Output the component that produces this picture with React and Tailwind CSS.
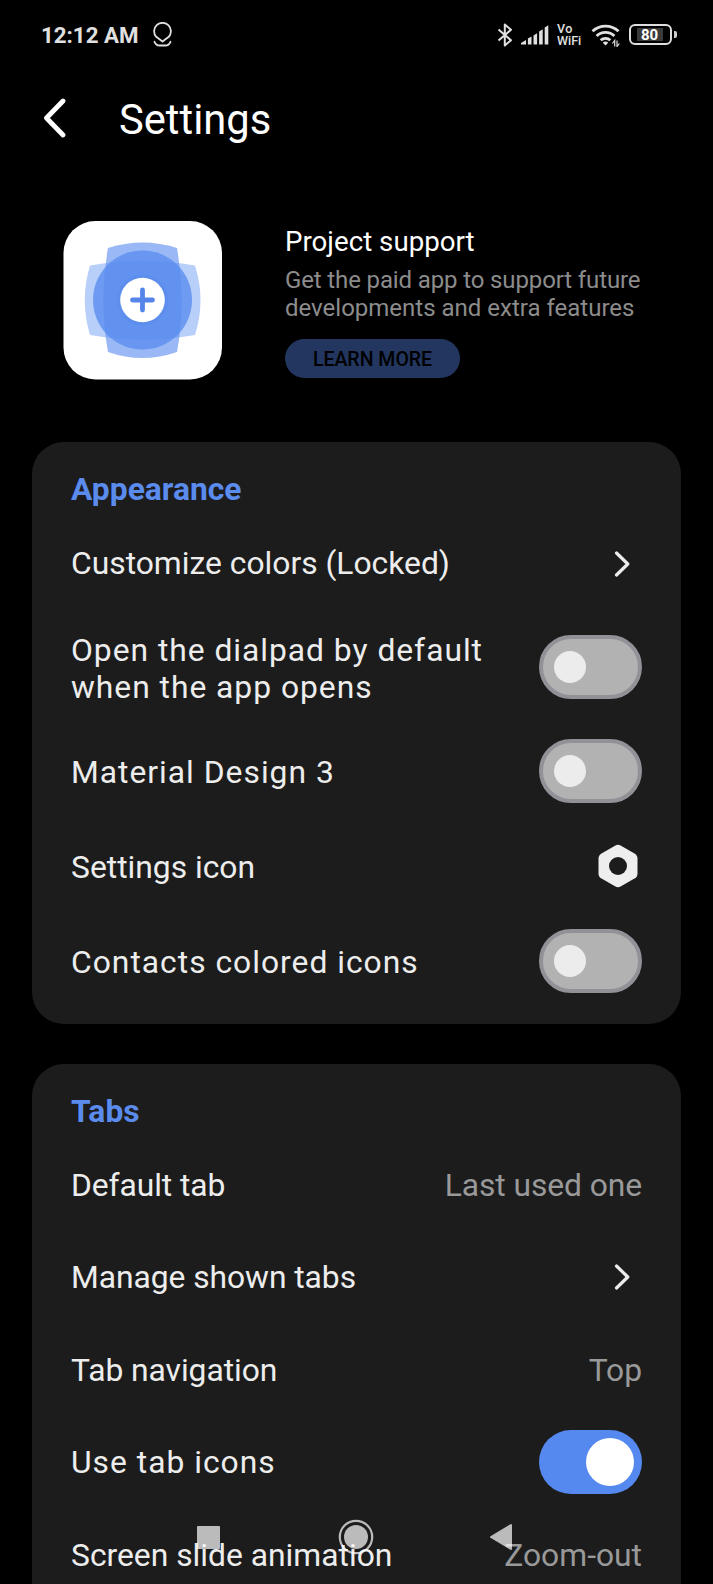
import React from "react";

function StatusBar() {
  return (
    <div className="flex h-[69px] shrink-0 items-center pl-[41px] pr-[36px] text-[#e0e0e0]">
      <span className="text-[22.300px] leading-[28px] font-bold">12:12 AM</span>
      <svg className="ml-[13px]" width="22" height="26" viewBox="0 0 22 26" fill="none" stroke="currentColor" strokeWidth="1.8" strokeLinecap="round" strokeLinejoin="round">
        <path d="M10.500 19.500 L4.200 14.800 A8.400 8.400 0 1 1 16.800 14.800 Z" />
        <path d="M2.500 19.800 Q4.100 23.500 7.500 23.500 H13.500 Q16.900 23.500 18.500 19.800" />
      </svg>
      <div className="ml-auto flex items-center">
        <svg width="16" height="26" viewBox="0 0 16 26" fill="none" stroke="currentColor" strokeWidth="2" strokeLinejoin="round">
          <path d="M1.500 7.500 L14 18.200 L7.800 23.500 V2.500 L14 7.800 L1.500 18.500" />
        </svg>
        <svg className="ml-[8px]" width="28" height="20" viewBox="0 0 28 20" fill="currentColor">
          <path d="M0 19.500 V18 L5 15 V19.500 Z M6.900 19.500 V13.600 L10.500 11.500 V19.500 Z M12.500 19.500 V10.500 L16.100 8.300 V19.500 Z M18.100 19.500 V6.500 L21.700 4.300 V19.500 Z M23.700 19.500 V2.500 L27.300 0.300 V19.500 Z" />
        </svg>
        <div className="ml-[8px] flex w-[26px] flex-col pt-px text-[12.500px] leading-[12px] font-medium">
          <span className="tracking-[0.500px]">Vo</span>
          <span>WiFi</span>
        </div>
        <svg className="ml-[8px]" width="30" height="24" viewBox="0 0 30 24" fill="none" stroke="currentColor" strokeWidth="2.800">
          <path d="M1.500 8.300 A19 19 0 0 1 27.500 8.300" />
          <path d="M5.600 13 A12.800 12.800 0 0 1 23.400 13" />
          <path d="M9.700 17.200 A7 7 0 0 1 19.300 17.200" />
          <path d="M14.500 22.500 L11.800 19.700 A3.600 3.600 0 0 1 17.200 19.700 Z" fill="currentColor" stroke="none" />
          <path d="M23.700 23.500 V17.500 L21.300 20.500 M26 17.500 V23.500 L28.400 20.500" strokeWidth="1.200" />
        </svg>
        <div className="ml-[8px] flex h-[21px] w-[43px] items-center justify-center rounded-[6px] border-2 border-[#dedede] pr-[2px]">
          <span className="flex h-[13px] w-[26px] items-center justify-center bg-[#3a3a3a] pt-px text-[15px] leading-[15px] font-bold text-white">80</span>
        </div>
        <span className="ml-[2px] h-[7px] w-[3px] rounded-r-[2px] bg-[#cfcfcf]" />
      </div>
    </div>
  );
}

function AppIcon() {
  return (
    <svg width="159" height="159" viewBox="0 0 159 159">
      <rect x="0.500" width="158.500" height="158.500" rx="32" fill="#ffffff" />
      <path d="M27 44.500 Q79.500 35 132 44.500 Q143 79 132 114 Q79.500 123 27 114 Q16.500 79 27 44.500 Z" fill="#b8cff9" />
      <path d="M45 27 Q79.500 16 114 27 Q123.500 79 114 131 Q79.500 143 45 131 Q35.500 79 45 27 Z" fill="#5b8def" fillOpacity="0.620" />
      <circle cx="79.500" cy="79" r="49.500" fill="#5b8def" fillOpacity="0.800" />
      <circle cx="79.500" cy="79" r="25.500" fill="#5585e8" fillOpacity="0.350" />
      <circle cx="79.500" cy="79" r="22.300" fill="#ffffff" />
      <path d="M79.500 69 V89 M69.500 79 H89.500" stroke="#5585ea" strokeWidth="4.800" strokeLinecap="round" />
    </svg>
  );
}

function Chevron() {
  return (
    <svg className="mr-[12px]" width="16" height="26" viewBox="0 0 16 26" fill="none" stroke="#ececec" strokeWidth="3.200" strokeLinecap="round" strokeLinejoin="round">
      <path d="M2.500 2 L13.800 13 L2.500 24" />
    </svg>
  );
}

function Toggle({ on = false }) {
  return on ? (
    <span className="flex h-16 w-[103px] shrink-0 items-center justify-end rounded-full bg-[#5589f0] pr-2">
      <span className="size-12 rounded-full bg-white" />
    </span>
  ) : (
    <span className="flex h-16 w-[103px] shrink-0 items-center rounded-full border-4 border-[#929198] bg-[#b2b2b2] pl-[11px]">
      <span className="size-8 rounded-full bg-[#ececec]" />
    </span>
  );
}

function Row({ label, className, labelClassName = "pt-[2px]", children }) {
  return (
    <div className={"flex items-center justify-between text-[31.800px] leading-[37.500px] text-[#ededed] " + className}>
      <span className={"whitespace-pre " + labelClassName}>{label}</span>
      {children}
    </div>
  );
}

function Value({ children }) {
  return <span className="pt-[2px] text-[#999999]">{children}</span>;
}

function Card({ title, className, children }) {
  return (
    <section className={"mx-8 shrink-0 rounded-[32px] bg-[#1c1c1c] px-[39px] " + className}>
      <h2 className="pt-[28px] text-[31.800px] leading-[38px] font-bold text-[#5a8bed]">{title}</h2>
      {children}
    </section>
  );
}

export default function App() {
  return (
    <main className="relative flex h-[1584px] w-[713px] flex-col overflow-hidden bg-black font-['Roboto',sans-serif]">
      <StatusBar />
      <header className="flex h-[98px] shrink-0 items-center pl-[42px]">
        <svg width="26" height="40" viewBox="0 0 26 40" fill="none" stroke="#ffffff" strokeWidth="4.800" strokeLinecap="round" strokeLinejoin="round">
          <path d="M21 3 L4.500 20 L21 37" />
        </svg>
        <h1 className="ml-[51px] pt-[3px] text-[41.700px] leading-[50px] text-white">Settings</h1>
      </header>
      <section className="flex shrink-0 pt-[54px] pl-[63px]">
        <AppIcon />
        <div className="ml-[63px] flex flex-col items-start pt-[5px]">
          <h3 className="text-[27.700px] leading-[32px] text-white">Project support</h3>
          <p className="mt-[8px] flex flex-col text-[24px] leading-[28px] whitespace-pre text-[#8c8c8c]">
            <span className="tracking-[-0.130px]">Get the paid app to support future</span>
            <span>developments and extra features</span>
          </p>
          <button className="mt-[17px] flex h-[39px] w-[175px] items-center justify-center rounded-full bg-[#22365f] pt-[3px] text-[19.500px] leading-[24px] font-medium text-black">
            LEARN MORE
          </button>
        </div>
      </section>
      <Card title="Appearance" className="mt-[62px] h-[582px]">
        <Row label="Customize colors (Locked)" className="mt-[10px] h-[92px]" labelClassName="pt-0">
          <Chevron />
        </Row>
        <Row label={"Open the dialpad by default\nwhen the app opens"} className="mt-[5px] h-[104px] tracking-[0.970px]" labelClassName="pt-[4px]">
          <Toggle />
        </Row>
        <Row label="Material Design 3" className="h-[104px] tracking-[1px]" labelClassName="pt-[4px]">
          <Toggle />
        </Row>
        <Row label="Settings icon" className="h-[86px]" labelClassName="pt-[3px]">
          <svg className="mr-[4px]" width="40" height="44" viewBox="0 0 40 44">
            <path d="M17 1.700 Q20 0 23 1.700 L36.500 9.400 Q39.500 11.200 39.500 14.600 V29.400 Q39.500 32.800 36.500 34.600 L23 42.300 Q20 44 17 42.300 L3.500 34.600 Q0.500 32.800 0.500 29.400 V14.600 Q0.500 11.200 3.500 9.400 Z" fill="#eeeeee" />
            <circle cx="20" cy="22" r="9" fill="#1c1c1c" />
          </svg>
        </Row>
        <Row label="Contacts colored icons" className="h-[104px] tracking-[1px]" labelClassName="pt-[4px]">
          <Toggle />
        </Row>
      </Card>
      <Card title="Tabs" className="mt-10 h-[560px]">
        <Row label="Default tab" className="mt-[9px] h-[92px] tracking-[-0.080px]">
          <Value>Last used one</Value>
        </Row>
        <Row label="Manage shown tabs" className="h-[91px] tracking-[-0.050px]">
          <Chevron />
        </Row>
        <Row label="Tab navigation" className="mt-[2px] h-[92px] tracking-[-0.050px]">
          <Value>Top</Value>
        </Row>
        <Row label="Use tab icons" className="h-[92px] tracking-[1px]">
          <Toggle on />
        </Row>
        <Row label="Screen slide animation" className="h-[93px]">
          <Value>Zoom-out</Value>
        </Row>
      </Card>
      <nav className="absolute top-[1519px] left-[197px] flex items-center opacity-70">
        <span className="size-[23px] rounded-[1px] bg-white" />
        <svg className="ml-[118px]" width="36" height="36" viewBox="0 0 36 36">
          <circle cx="18" cy="18" r="16.200" fill="none" stroke="#ffffff" strokeWidth="2.200" />
          <circle cx="18" cy="18" r="12" fill="#ffffff" />
        </svg>
        <svg className="ml-[115px]" width="24" height="28" viewBox="0 0 24 28">
          <path d="M22 2 V26 L2 14 Z" fill="#ffffff" stroke="#ffffff" strokeWidth="2" strokeLinejoin="round" />
        </svg>
      </nav>
    </main>
  );
}
